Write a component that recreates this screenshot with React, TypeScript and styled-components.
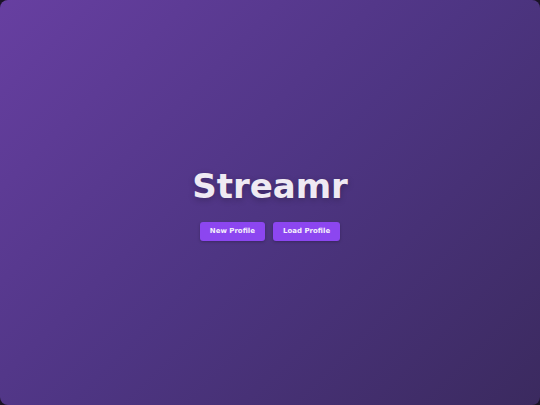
import * as React from 'react'
import styled, {createGlobalStyle} from 'styled-components'

const Global = createGlobalStyle`
  html, body {
    margin: 0;
    padding: 0;
    background: #1a1326;
  }
  body {
    font-family: 'DejaVu Sans', sans-serif;
  }
`

const Window = styled.div`
  width: 540px;
  height: 405px;
  box-sizing: border-box;
  padding-top: 4px;
  border-radius: 8px;
  overflow: hidden;
  background: linear-gradient(135deg, #673fa1 0%, #4e3583 50%, #3b2a5f 100%);
  display: flex;
  flex-direction: column;
  align-items: center;
  justify-content: center;
`

const Title = styled.h1`
  margin: 0 0 19px;
  font-size: 34px;
  font-weight: bold;
  color: #efeaf3;
  line-height: 1;
  text-shadow: 0 2px 6px rgba(0, 0, 0, 0.25);
`

const Actions = styled.div`
  display: flex;
  gap: 8px;
`

const Button = styled.button`
  height: 19px;
  padding: 0 10px;
  border: none;
  border-radius: 3px;
  background: #8c46f0;
  color: #f4eefc;
  font-family: 'DejaVu Sans', sans-serif;
  font-size: 7px;
  font-weight: bold;
  box-shadow: 0 1px 3px rgba(0, 0, 0, 0.25);
  cursor: pointer;
`

export default function App() {
  return (
    <>
      <Global />
      <Window>
        <Title>Streamr</Title>
        <Actions>
          <Button>New Profile</Button>
          <Button>Load Profile</Button>
        </Actions>
      </Window>
    </>
  )
}
